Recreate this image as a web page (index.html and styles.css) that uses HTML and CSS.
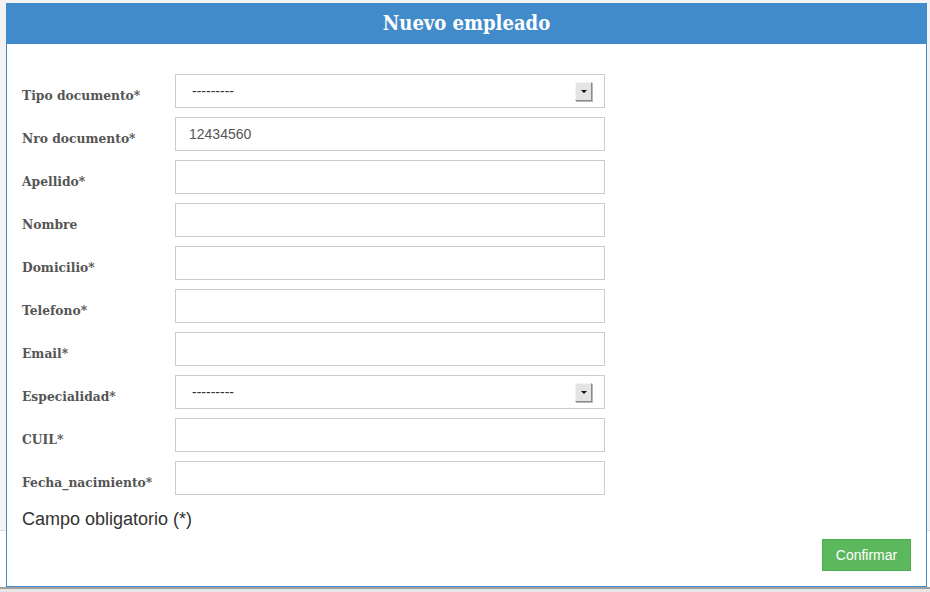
FILE: index.html
```html
<!DOCTYPE html>
<html lang="es">
<head>
<meta charset="utf-8">
<title>Nuevo empleado</title>
<link rel="stylesheet" href="styles.css">
</head>
<body>
<div class="modal">
  <div class="modal-header">Nuevo empleado</div>
  <div class="modal-body">
    <div class="form-group">
      <label class="label">Tipo documento*</label>
      <div class="control select"><span class="value">---------</span><span class="arrow"></span></div>
    </div>
    <div class="form-group">
      <label class="label">Nro documento*</label>
      <div class="control"><span class="value num">12434560</span></div>
    </div>
    <div class="form-group">
      <label class="label">Apellido*</label>
      <div class="control"></div>
    </div>
    <div class="form-group">
      <label class="label">Nombre</label>
      <div class="control"></div>
    </div>
    <div class="form-group">
      <label class="label">Domicilio*</label>
      <div class="control"></div>
    </div>
    <div class="form-group">
      <label class="label">Telefono*</label>
      <div class="control"></div>
    </div>
    <div class="form-group">
      <label class="label">Email*</label>
      <div class="control"></div>
    </div>
    <div class="form-group">
      <label class="label">Especialidad*</label>
      <div class="control select"><span class="value">---------</span><span class="arrow"></span></div>
    </div>
    <div class="form-group">
      <label class="label">CUIL*</label>
      <div class="control"></div>
    </div>
    <div class="form-group">
      <label class="label">Fecha_nacimiento*</label>
      <div class="control"></div>
    </div>
    <p class="note">Campo obligatorio (*)</p>
  </div>
  <div class="modal-footer">
    <button class="btn">Confirmar</button>
  </div>
</div>
</body>
</html>
```
FILE: styles.css
```css
html, body {
  margin: 0;
  padding: 0;
}
body {
  width: 930px;
  height: 592px;
  overflow: hidden;
  background: linear-gradient(to bottom,
    #f3f3f3 0, #f3f3f3 530px,
    #dcdcdc 530px, #dcdcdc 531px,
    #ffffff 531px, #ffffff 587px,
    #a0a0a0 587px, #a0a0a0 589px,
    #e6e6e6 589px);
  font-family: "Liberation Sans", Arial, sans-serif;
}
.modal {
  margin: 3px 3px 0 6px;
  height: 584px;
  box-sizing: border-box;
  border: 1px solid #428bca;
  border-top: 0;
  background: #fff;
  display: flex;
  flex-direction: column;
}
.modal-header {
  height: 41px;
  margin: 0 -1px;
  background: #428bca;
  color: #fff;
  font-family: "DejaVu Serif", serif;
  font-weight: bold;
  font-size: 20px;
  font-stretch: condensed;
  display: flex;
  align-items: center;
  justify-content: center;
  padding-bottom: 1px;
  box-sizing: border-box;
}
.modal-body {
  padding: 30px 15px 0 15px;
  flex: 1;
}
.form-group {
  display: flex;
  margin-bottom: 9px;
}
.label {
  width: 153px;
  flex: none;
  padding-top: 15px;
  font-family: "DejaVu Serif", serif;
  font-weight: bold;
  font-size: 12.3px;
  color: #555;
  line-height: 14px;
}
.control {
  width: 430px;
  height: 34px;
  box-sizing: border-box;
  border: 1px solid #ccc;
  background: #fff;
  display: flex;
  align-items: center;
  padding: 0 12px 0 13px;
  font-size: 14px;
  color: #555;
}
.control .value {
  flex: 1;
}
.select .value {
  padding-left: 3px;
  font-size: 14px;
  color: #333;
}
.arrow {
  width: 17px;
  height: 19px;
  box-sizing: border-box;
  background: #e4e4e4;
  border-top: 1px solid #f4f4f4;
  border-left: 1px solid #f4f4f4;
  border-right: 1px solid #8a8a8a;
  border-bottom: 1px solid #8a8a8a;
  box-shadow: 1px 1px 0 #b8b8b8;
  position: relative;
}
.arrow::after {
  content: "";
  position: absolute;
  left: 5px;
  top: 7px;
  border-left: 3px solid transparent;
  border-right: 3px solid transparent;
  border-top: 3px solid #111;
}
.note {
  margin: 13px 0 0;
  font-size: 18px;
  color: #333;
  line-height: 22px;
}
.modal-footer {
  display: flex;
  justify-content: flex-end;
  padding: 0 15px 15px;
}
.btn {
  width: 89px;
  height: 32px;
  background: #5cb85c;
  border: 1px solid #4cae4c;
  color: #fff;
  font-family: "Liberation Sans", Arial, sans-serif;
  font-size: 14px;
  padding: 0;
  border-radius: 0;
}
```
